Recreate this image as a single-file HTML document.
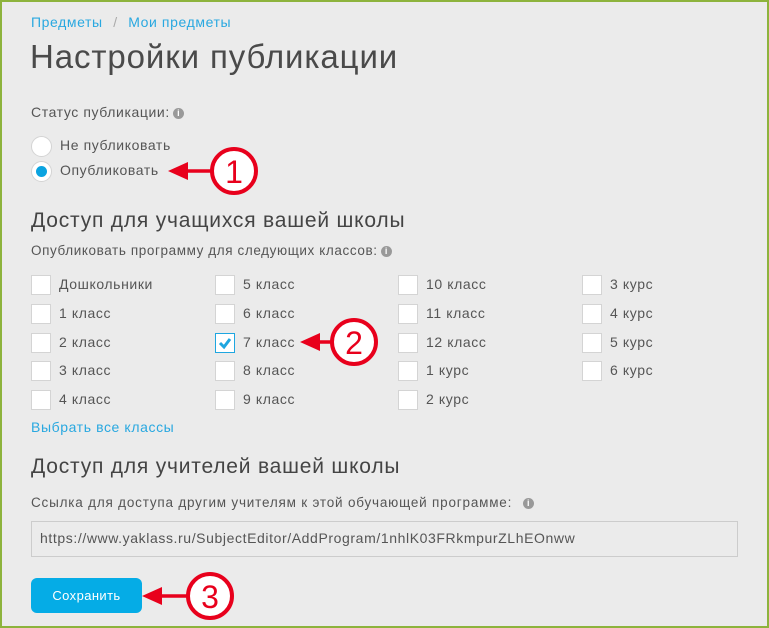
<!DOCTYPE html>
<html><head><meta charset="utf-8"><style>
body{margin:0;width:769px;height:628px;overflow:hidden;font-family:"Liberation Sans",sans-serif;color:#555;}
.page{position:absolute;left:0;top:0;width:765px;height:624px;border:2px solid #8db33c;background:#ebebeb;}
.a{position:absolute;white-space:nowrap;}
.link{color:#29a8e0;font-size:14px;letter-spacing:0.6px}
.t{font-size:14px;color:#555;letter-spacing:0.6px}
.h{font-size:21px;color:#444;letter-spacing:0.8px}
.cb{position:absolute;width:18px;height:18px;background:#fff;border:1px solid #d4d4d4;}
.rd{position:absolute;width:19px;height:19px;border-radius:50%;background:#fff;border:1px solid #d4d4d4;}
.i{display:inline-block;width:11px;height:11px;border-radius:50%;background:#999;color:#fff;font-size:9px;line-height:11px;text-align:center;font-weight:bold;vertical-align:1px;margin-left:3px;letter-spacing:0}
</style></head><body><div class="page"></div>
<div class="a link" style="left:31px;top:14px">Предметы <span style="color:#aaa;margin:0 6px">/</span> Мои предметы</div>
<div class="a" style="left:30px;top:38px;font-size:33px;color:#4a4a4a;letter-spacing:0.9px">Настройки публикации</div>
<div class="a t" style="left:31px;top:104px">Статус публикации:<span class="i">i</span></div>
<div class="rd" style="left:31px;top:136px"></div><div class="a t" style="left:60px;top:137px">Не публиковать</div>
<div class="rd" style="left:31px;top:161px"></div><div style="position:absolute;left:36px;top:166px;width:11px;height:11px;border-radius:50%;background:#0aa3e0"></div><div class="a t" style="left:60px;top:162px">Опубликовать</div>
<div class="a h" style="left:31px;top:209px">Доступ для учащихся вашей школы</div>
<div class="a t" style="left:31px;top:243px;font-size:13.5px">Опубликовать программу для следующих классов:<span class="i">i</span></div>
<div id="g"></div>
<div class="a link" style="left:31px;top:419px">Выбрать все классы</div>
<div class="a h" style="left:31px;top:455px">Доступ для учителей вашей школы</div>
<div class="a t" style="left:31px;top:495px;font-size:13.5px;letter-spacing:0.8px">Ссылка для доступа другим учителям к этой обучающей программе: <span class="i" style="margin-left:6px">i</span></div>
<div style="position:absolute;left:31px;top:521px;width:705px;height:34px;border:1px solid #ccc;background:#ebebeb"></div>
<div class="a t" style="left:40px;top:530px">https://www.yaklass.ru/SubjectEditor/AddProgram/1nhlK03FRkmpurZLhEOnww</div>
<div style="position:absolute;left:31px;top:578px;width:111px;height:35px;border-radius:6px;background:#05ace6;color:#fff;font-size:13px;line-height:35px;text-align:center;letter-spacing:0.4px">Сохранить</div>
<svg style="position:absolute;left:0;top:0" width="769" height="628">
<g fill="#e8001c" stroke="#e8001c">
<line x1="180" y1="171" x2="212" y2="171" stroke-width="3.5"/><polygon points="168,171 188,162 188,180" stroke="none"/>
<circle cx="234" cy="171" r="22" fill="#fff" stroke-width="4"/>
<line x1="312" y1="342" x2="333" y2="342" stroke-width="3.5"/><polygon points="300,342 320,333 320,351" stroke="none"/>
<circle cx="354" cy="342" r="22" fill="#fff" stroke-width="4"/>
<line x1="154" y1="596" x2="188" y2="596" stroke-width="3.5"/><polygon points="142,596 162,587 162,605" stroke="none"/>
<circle cx="210" cy="596" r="22" fill="#fff" stroke-width="4"/>
</g>
<g fill="#e8001c" font-family="Liberation Sans" font-size="32" text-anchor="middle">
<text x="234" y="183">1</text><text x="354" y="354">2</text><text x="210" y="608">3</text></g>
</svg>
<script>
var cols=[["Дошкольники","1 класс","2 класс","3 класс","4 класс"],["5 класс","6 класс","7 класс","8 класс","9 класс"],["10 класс","11 класс","12 класс","1 курс","2 курс"],["3 курс","4 курс","5 курс","6 курс"]];
var xs=[31,215,398,582],h="";
cols.forEach(function(c,i){c.forEach(function(t,j){var y=275+j*28.8;var chk=(i==1&&j==2);
h+='<div class="cb" style="left:'+xs[i]+'px;top:'+y+'px;'+(chk?'border-color:#1ea6e0':'')+'"></div>';
if(chk)h+='<svg style="position:absolute;left:'+xs[i]+'px;top:'+y+'px" width="20" height="20"><path d="M5 10 L9 14 L15 6" stroke="#1ea6e0" stroke-width="3" fill="none"/></svg>';
h+='<div class="a t" style="left:'+(xs[i]+28)+'px;top:'+(y+1)+'px">'+t+'</div>';});});
document.getElementById("g").innerHTML=h;
</script>
</body></html>
